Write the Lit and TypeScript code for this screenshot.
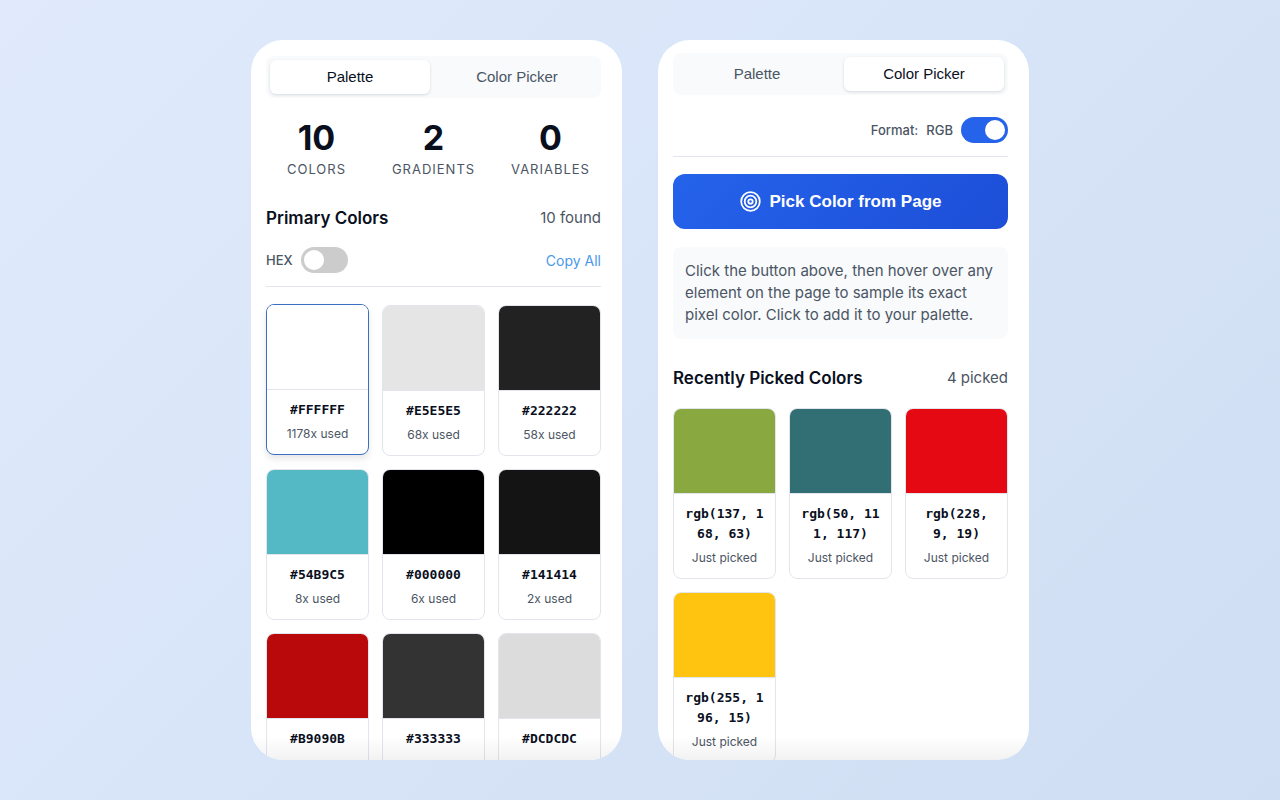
import { LitElement, html, css } from "lit";
import { customElement, property } from "lit/decorators.js";
import { classMap } from "lit/directives/class-map.js";
import { styleMap } from "lit/directives/style-map.js";

interface Swatch {
  color: string;
  note: string;
  selected?: boolean;
}

const PRIMARY: Swatch[] = [
  { color: "#FFFFFF", note: "1178x used", selected: true },
  { color: "#E5E5E5", note: "68x used" },
  { color: "#222222", note: "58x used" },
  { color: "#54B9C5", note: "8x used" },
  { color: "#000000", note: "6x used" },
  { color: "#141414", note: "2x used" },
  { color: "#B9090B", note: "" },
  { color: "#333333", note: "" },
  { color: "#DCDCDC", note: "" },
];

const PICKED: Swatch[] = [
  { color: "rgb(137, 168, 63)", note: "Just picked" },
  { color: "rgb(50, 111, 117)", note: "Just picked" },
  { color: "rgb(228, 9, 19)", note: "Just picked" },
  { color: "rgb(255, 196, 15)", note: "Just picked" },
];

@customElement("color-card")
class ColorCard extends LitElement {
  @property() color = "";
  @property() note = "";
  @property({ type: Boolean, reflect: true }) selected = false;

  static styles = css`
    :host {
      display: block;
    }
    .card {
      display: block;
      box-sizing: border-box;
      width: 100%;
      padding: 0;
      overflow: hidden;
      border: 1px solid #e2e6ec;
      border-radius: 8px;
      background: #fff;
      font-family: Inter, sans-serif;
      text-align: center;
      cursor: pointer;
    }
    .card.selected {
      border-color: #3b6fc4;
      box-shadow: 0 4px 6px rgba(15, 23, 42, 0.1);
      transform: translateY(-1px);
    }
    .swatch {
      display: block;
      height: 84px;
      border-bottom: 1px solid #e2e6ec;
    }
    .info {
      display: flex;
      flex-direction: column;
      gap: 6px;
      padding: 10px 10px 12px;
    }
    .value {
      color: #0a0f1e;
      font: 600 13px/20px "DejaVu Sans Mono", monospace;
      word-break: break-all;
    }
    .note {
      min-height: 16px;
      color: #4b5563;
      font-size: 12px;
      line-height: 16px;
    }
  `;

  render() {
    return html`
      <button class=${classMap({ card: true, selected: this.selected })} type="button">
        <span class="swatch" style=${styleMap({ background: this.color })}></span>
        <span class="info">
          <span class="value">${this.color}</span>
          <span class="note">${this.note}</span>
        </span>
      </button>
    `;
  }
}

@customElement("app-root")
class AppRoot extends LitElement {
  static styles = css`
    :host {
      display: block;
      color: #0a0f1e;
      font-family: Inter, sans-serif;
      font-size: 15px;
    }
    .stage {
      display: flex;
      justify-content: center;
      gap: 36px;
      box-sizing: border-box;
      height: 100vh;
      padding: 40px 16px;
      background: linear-gradient(135deg, #e0eafc, #cfdef3);
    }
    .panel {
      position: relative;
      box-sizing: border-box;
      flex: 0 1 371px;
      padding: 16px 21px 0 15px;
      overflow: hidden;
      border-radius: 32px;
      background: #fff;
    }
    .picker {
      padding-top: 13px;
    }
    .panel::after {
      content: "";
      position: absolute;
      inset: auto 0 0;
      height: 24px;
      background: linear-gradient(rgba(0, 0, 0, 0), rgba(0, 0, 0, 0.05));
      pointer-events: none;
    }
    button {
      border: 0;
      font-family: "Liberation Sans", Arial, sans-serif;
      cursor: pointer;
    }
    .tabs {
      display: grid;
      grid-template-columns: 1fr 1fr;
      gap: 7px;
      padding: 4px;
      border-radius: 8px;
      background: #f8fafc;
    }
    .tab {
      height: 34px;
      padding: 0 0 2px;
      border-radius: 6px;
      background: none;
      color: #4b5563;
      font-size: 15px;
    }
    .tab.active {
      background: #fff;
      box-shadow: 0 1px 3px rgba(15, 23, 42, 0.14);
      color: #0a0f1e;
    }
    .stats {
      display: grid;
      grid-template-columns: repeat(3, 1fr);
      gap: 16px;
      margin-top: 19px;
      text-align: center;
    }
    .stat {
      display: flex;
      flex-direction: column;
      align-items: center;
    }
    .count {
      font-size: 34px;
      font-weight: 700;
      font-optical-sizing: none;
      line-height: 42px;
    }
    .label {
      color: #4b5563;
      font-size: 13px;
      line-height: 20px;
      letter-spacing: 1px;
    }
    .head {
      display: flex;
      justify-content: space-between;
      align-items: center;
      margin-top: 27px;
      line-height: 24px;
    }
    h2 {
      margin: 0;
      font-size: 17px;
      font-weight: 600;
    }
    .total {
      color: #4b5563;
    }
    .controls {
      display: flex;
      justify-content: space-between;
      align-items: center;
      margin-top: 17px;
      padding-bottom: 13px;
      border-bottom: 1px solid #e2e6ec;
    }
    .picker .controls {
      justify-content: flex-end;
      margin-top: 22px;
    }
    .format {
      display: flex;
      align-items: center;
      gap: 8px;
      color: #4b5563;
      font-size: 13px;
      font-weight: 500;
    }
    .switch {
      appearance: none;
      box-sizing: border-box;
      width: 47px;
      height: 26px;
      margin: 0;
      padding: 3px;
      border-radius: 13px;
      background: #ccc;
      cursor: pointer;
    }
    .switch::before {
      content: "";
      display: block;
      width: 20px;
      height: 20px;
      border-radius: 50%;
      background: #fff;
    }
    .switch:checked {
      background: #2563eb;
    }
    .switch:checked::before {
      margin-left: auto;
    }
    .copy {
      color: #4a9ae8;
      font-size: 14px;
      text-decoration: none;
    }
    .pick {
      display: flex;
      justify-content: center;
      align-items: center;
      gap: 9px;
      width: 100%;
      height: 55px;
      margin-top: 17px;
      border-radius: 12px;
      background: linear-gradient(135deg, #2563eb, #1d4ed8);
      color: #fff;
      font-size: 17px;
      font-weight: 700;
    }
    .hint {
      margin: 18px 0 0;
      padding: 13px 12px;
      border-radius: 8px;
      background: #f8fafc;
      color: #4b5563;
      line-height: 22px;
    }
    .cards {
      display: grid;
      grid-template-columns: repeat(3, 1fr);
      gap: 13px;
      margin-top: 18px;
    }
  `;

  private tabs(active: string) {
    return html`
      <div class="tabs" role="tablist">
        ${["Palette", "Color Picker"].map(
          (name) => html`
            <button
              class=${classMap({ tab: true, active: name === active })}
              type="button"
              role="tab"
              aria-selected=${name === active}
            >${name}</button>
          `
        )}
      </div>
    `;
  }

  private stat(count: number, label: string) {
    return html`
      <div class="stat">
        <span class="count">${count}</span>
        <span class="label">${label}</span>
      </div>
    `;
  }

  private cards(items: Swatch[]) {
    return html`
      <div class="cards">
        ${items.map(
          (s) => html`<color-card .color=${s.color} .note=${s.note} .selected=${!!s.selected}></color-card>`
        )}
      </div>
    `;
  }

  render() {
    return html`
      <main class="stage">
        <section class="panel">
          ${this.tabs("Palette")}
          <div class="stats">
            ${this.stat(10, "COLORS")} ${this.stat(2, "GRADIENTS")} ${this.stat(0, "VARIABLES")}
          </div>
          <div class="head">
            <h2>Primary Colors</h2>
            <span class="total">10 found</span>
          </div>
          <div class="controls">
            <label class="format">
              <span>HEX</span>
              <input class="switch" type="checkbox" role="switch" />
            </label>
            <a class="copy" href="#">Copy All</a>
          </div>
          ${this.cards(PRIMARY)}
        </section>

        <section class="panel picker">
          ${this.tabs("Color Picker")}
          <div class="controls">
            <label class="format">
              <span>Format:</span>
              <span>RGB</span>
              <input class="switch" type="checkbox" role="switch" checked />
            </label>
          </div>
          <button class="pick" type="button">
            <svg width="21" height="21" viewBox="0 0 21 21" fill="none" stroke="#fff" stroke-width="1.8" aria-hidden="true">
              <circle cx="10.5" cy="10.5" r="9.3" />
              <circle cx="10.5" cy="10.5" r="5.8" />
              <circle cx="10.5" cy="10.5" r="2.2" />
            </svg>
            Pick Color from Page
          </button>
          <p class="hint">
            Click the button above, then hover over any element on the page to sample its exact pixel
            color. Click to add it to your palette.
          </p>
          <div class="head">
            <h2>Recently Picked Colors</h2>
            <span class="total">4 picked</span>
          </div>
          ${this.cards(PICKED)}
        </section>
      </main>
    `;
  }
}
